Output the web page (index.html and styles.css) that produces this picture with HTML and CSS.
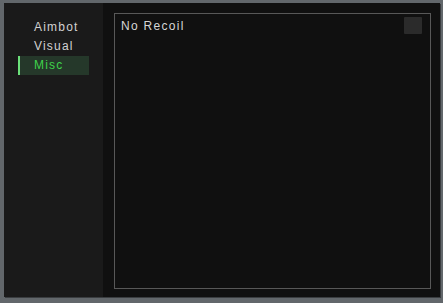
FILE: index.html
```html
<!DOCTYPE html>
<html>
<head>
<meta charset="utf-8">
<link rel="stylesheet" href="styles.css">
</head>
<body>
<div class="window">
  <nav class="sidebar">
    <div class="tab">Aimbot</div>
    <div class="tab">Visual</div>
    <div class="tab active">Misc</div>
  </nav>
  <main class="content">
    <section class="panel">
      <div class="row">
        <span class="label">No Recoil</span>
        <span class="checkbox"></span>
      </div>
    </section>
  </main>
</div>
</body>
</html>
```
FILE: styles.css
```css
html, body {
  margin: 0;
  padding: 0;
}
body {
  width: 443px;
  height: 303px;
  background: #62676b;
  font-family: "Liberation Sans", Arial, sans-serif;
  overflow: hidden;
}
.window {
  margin: 3px 0 0 4px;
  width: 436px;
  height: 294px;
  display: flex;
  background: #101010;
  box-shadow: 1px 1px 0 #3a3d40;
}
.sidebar {
  width: 99px;
  background: #1a1a1a;
  padding: 15px 0 0 14px;
  box-sizing: border-box;
  display: flex;
  flex-direction: column;
}
.tab {
  width: 71px;
  height: 19px;
  line-height: 19px;
  padding-left: 16px;
  box-sizing: border-box;
  font-size: 12px;
  letter-spacing: 1.2px;
  color: #d2d2d2;
}
.tab.active {
  background: #25382a;
  color: #3fd24a;
  border-left: 2px solid #6be07a;
  padding-left: 14px;
}
.content {
  flex: 1;
  padding: 10px 9px 8px 11px;
  box-sizing: border-box;
  display: flex;
}
.panel {
  flex: 1;
  border: 1px solid #585858;
  padding: 3px 8px 0 6px;
}
.row {
  display: flex;
  justify-content: space-between;
  align-items: flex-start;
}
.label {
  font-size: 12px;
  letter-spacing: 1.3px;
  color: #d6d6d6;
  line-height: 17px;
  padding-top: 1px;
}
.checkbox {
  width: 18px;
  height: 17px;
  background: #2b2b2b;
  border-radius: 1px;
}
```
